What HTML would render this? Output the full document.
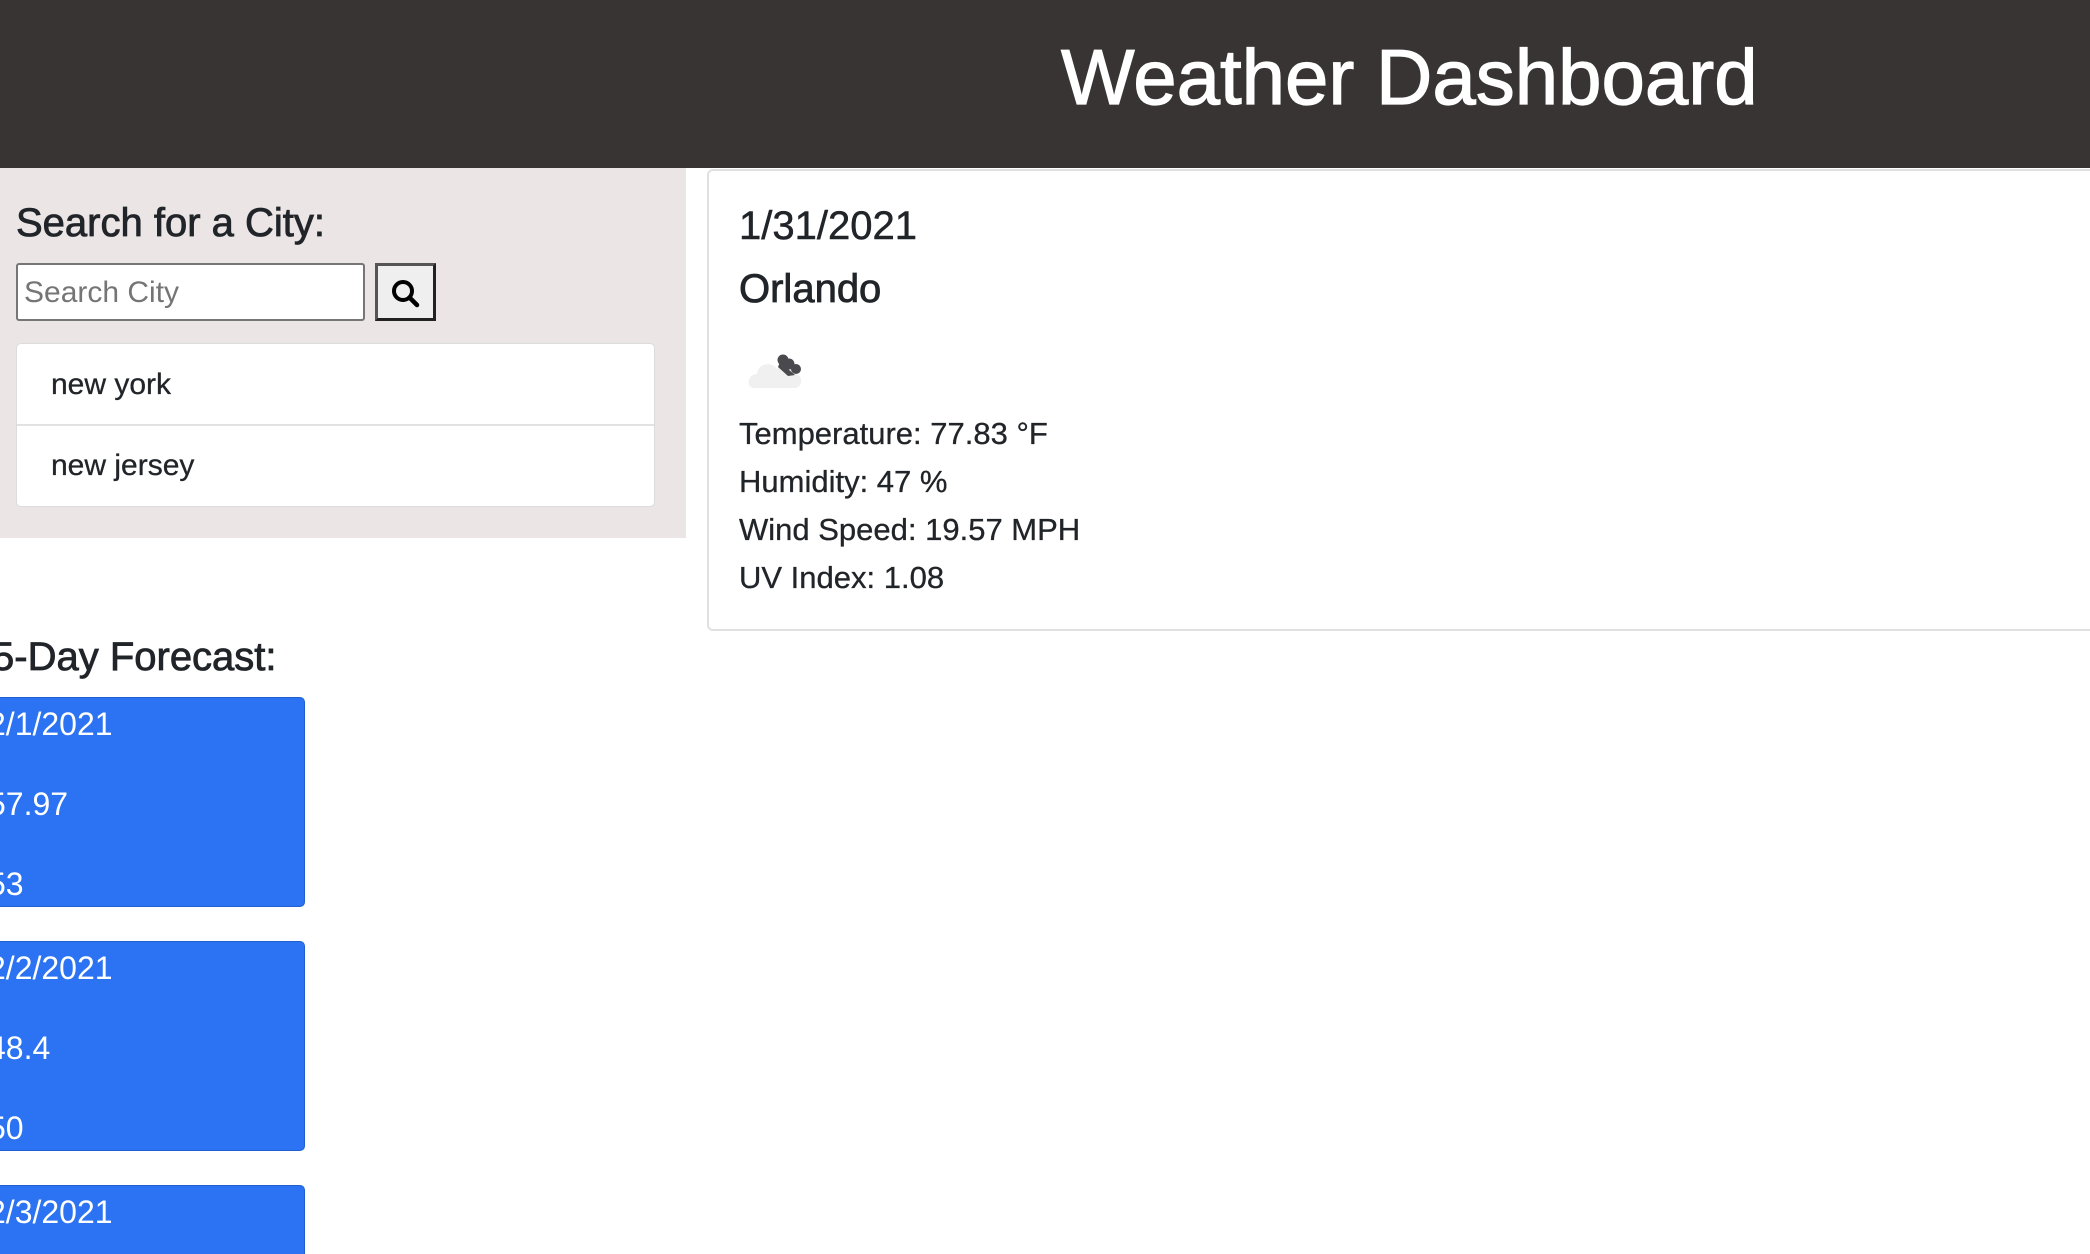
<!DOCTYPE html>
<html><head><meta charset="utf-8"><style>
*{margin:0;padding:0;box-sizing:border-box}
html{width:2090px;height:1254px;overflow:hidden}
body{width:2090px;height:1254px;overflow:hidden;background:#fff;font-family:"Liberation Sans",Arial,sans-serif;color:#212529;position:relative}
.a{position:absolute;line-height:1;white-space:nowrap}
.h{-webkit-text-stroke:0.8px #212529}
.card{position:absolute;left:-20px;width:325px;height:210px;background:#2b73f2;border:1px solid #1f5fd0;border-radius:5px}
.ct{color:#fff;font-size:32px}
</style></head><body>
<div style="position:absolute;left:0;top:0;width:2090px;height:168px;background:#383434"></div>
<div class="a" style="left:1061px;top:38px;font-size:78px;color:#fff;-webkit-text-stroke:1.2px #fff">Weather Dashboard</div>

<div style="position:absolute;left:0;top:168px;width:686px;height:370px;background:#ebe5e5"></div>
<div class="a h" style="left:16px;top:203px;font-size:40px">Search for a City:</div>
<div style="position:absolute;left:16px;top:263px;width:349px;height:58px;background:#fff;border:2px solid #767676;border-radius:3px"></div>
<div class="a" style="left:24px;top:278px;font-size:30px;color:#757575">Search City</div>
<div style="position:absolute;left:375px;top:263px;width:61px;height:58px;background:#efefef;border:3px solid #222;border-top-color:#555;border-left-color:#555"></div>
<svg style="position:absolute;left:390px;top:278px" width="32" height="32" viewBox="0 0 32 32"><circle cx="13" cy="13" r="9" fill="none" stroke="#000" stroke-width="4"/><line x1="19.5" y1="19.5" x2="27" y2="27" stroke="#000" stroke-width="4.5" stroke-linecap="round"/></svg>
<div style="position:absolute;left:16px;top:343px;width:639px;height:164px;background:#fff;border:1px solid #dcdcdc;border-radius:5px"></div>
<div style="position:absolute;left:17px;top:424px;width:637px;height:2px;background:#e2e2e2"></div>
<div class="a" style="left:51px;top:370px;font-size:30px;-webkit-text-stroke:0.3px #212529">new york</div>
<div class="a" style="left:51px;top:451px;font-size:30px;-webkit-text-stroke:0.3px #212529">new jersey</div>

<div class="a h" style="left:-8px;top:637px;font-size:40px">5-Day Forecast:</div>
<div class="card" style="top:697px"></div>
<div class="a ct" style="left:-12px;top:708px">2/1/2021</div>
<div class="a ct" style="left:-12px;top:788px">57.97</div>
<div class="a ct" style="left:-12px;top:868px">53</div>
<div class="card" style="top:941px"></div>
<div class="a ct" style="left:-12px;top:952px">2/2/2021</div>
<div class="a ct" style="left:-12px;top:1032px">48.4</div>
<div class="a ct" style="left:-12px;top:1112px">50</div>
<div class="card" style="top:1185px;height:75px"></div>
<div class="a ct" style="left:-12px;top:1196px">2/3/2021</div>

<div style="position:absolute;left:707px;top:169px;width:1500px;height:462px;background:#fff;border:2px solid #e0e0e0;border-radius:6px"></div>
<div class="a" style="left:739px;top:206px;font-size:40px;-webkit-text-stroke:0.5px #212529">1/31/2021</div>
<div class="a h" style="left:739px;top:269px;font-size:40px">Orlando</div>
<svg style="position:absolute;left:748px;top:348px" width="70" height="45" viewBox="0 0 70 45">
<path d="M6 40 C-2 40 -1 26 9 26 C10 15 24 13 29 21 C34 12 48 15 47 26 C56 27 55 40 46 40 Z" fill="#f0f0f0"/>
<circle cx="35" cy="12" r="5.5" fill="#4a4a4e"/><circle cx="41" cy="16" r="5.5" fill="#4a4a4e"/><circle cx="48" cy="21" r="5" fill="#4a4a4e"/><path d="M32 14 L47 27 L40 28 L30 19Z" fill="#4a4a4e"/>
</svg>
<div class="a" style="left:739px;top:418px;font-size:31px;-webkit-text-stroke:0.3px #212529">Temperature: 77.83 °F</div>
<div class="a" style="left:739px;top:466px;font-size:31px;-webkit-text-stroke:0.3px #212529">Humidity: 47 %</div>
<div class="a" style="left:739px;top:514px;font-size:31px;-webkit-text-stroke:0.3px #212529">Wind Speed: 19.57 MPH</div>
<div class="a" style="left:739px;top:562px;font-size:31px;-webkit-text-stroke:0.3px #212529">UV Index: 1.08</div>
</body></html>
